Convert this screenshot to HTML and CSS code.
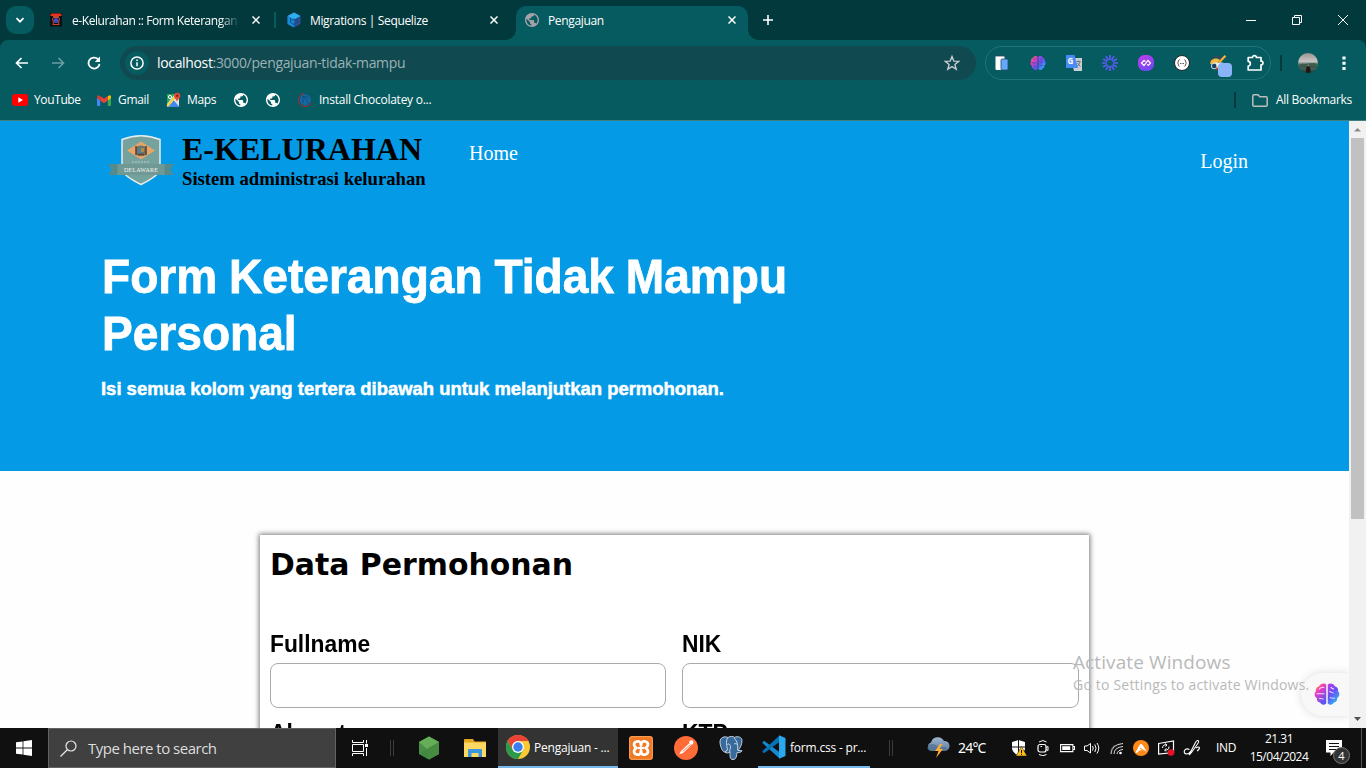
FILE: index.html
```html
<!DOCTYPE html>
<html lang="id">
<head>
<meta charset="utf-8">
<title>Pengajuan</title>
<link rel="stylesheet" href="styles.css">
</head>
<body>
<svg class="defs" width="0" height="0">
  <defs>
    <linearGradient id="brainL" x1="0" y1="0" x2=".6" y2="1"><stop offset="0" stop-color="#ff9a2e"/><stop offset=".15" stop-color="#ff8a3c"/><stop offset=".38" stop-color="#f23bc0"/><stop offset="1" stop-color="#5a55f5"/></linearGradient>
    <linearGradient id="brainR" x1="0" y1="0" x2=".6" y2="1"><stop offset="0" stop-color="#c03be8"/><stop offset=".5" stop-color="#6a50f5"/><stop offset="1" stop-color="#2bb5f8"/></linearGradient>
    <linearGradient id="loomy" x1="0" y1="0" x2=".5" y2="1"><stop offset="0" stop-color="#c63cf0"/><stop offset="1" stop-color="#7148ee"/></linearGradient>
    <linearGradient id="photo" x1="0" y1="0" x2="0" y2="1"><stop offset="0" stop-color="#9a918f"/><stop offset=".42" stop-color="#c9c5c3"/><stop offset=".52" stop-color="#7d8b87"/><stop offset="1" stop-color="#1f3a2c"/></linearGradient>
    <linearGradient id="cloud" x1="0" y1="0" x2="0" y2="1"><stop offset="0" stop-color="#9fb6cf"/><stop offset="1" stop-color="#5d7c9e"/></linearGradient>
    <symbol id="globe" viewBox="2 2 20 20"><path fill="currentColor" d="M12 2C6.480 2 2 6.480 2 12s4.480 10 10 10 10-4.480 10-10S17.520 2 12 2zm-1 17.930c-3.950-.49-7-3.850-7-7.930 0-.62.08-1.210.21-1.790L9 15v1c0 1.100.9 2 2 2v1.930zm6.900-2.540c-.26-.81-1-1.390-1.900-1.390h-1v-3c0-.55-.45-1-1-1H8v-2h2c.55 0 1-.45 1-1V7h2c1.100 0 2-.9 2-2v-.41c2.930 1.190 5 4.060 5 7.410 0 2.080-.8 3.970-2.100 5.390z"/></symbol>
    <symbol id="brain" viewBox="0 0 24 24">
      <path d="M11.300 2.500v19C9 23.600 6.300 22.600 5.700 20.600 3.300 20.400 2.200 18 2.800 16.300.3 15 0 11 1.800 9.300 1.200 7 2.600 4.800 4.600 4.500 5.500 1.500 9.500.5 11.300 2.500z" fill="url(#brainL)"/>
      <path d="M12.700 2.500v19c2.300 2.100 5 1.100 5.600-.9 2.400-.2 3.500-2.600 2.900-4.300 2.500-1.300 2.800-5.300 1-7 .6-2.300-.8-4.500-2.800-4.800-.9-3-4.900-4-6.700-2z" fill="url(#brainR)"/>
      <path d="M4.500 7.500C6 5.500 7.500 5 9.500 5.500M2.500 11.800h7M4.800 16.500c2-.5 2.800.5 4.200.8M15.500 5c1 2 1.500 2 3 2m-4.300 2.500c2 .3 2 1.500 4 1.500m-3.500 4.500c1.500.2 2 1.200 4.500.6" fill="none" stroke="var(--fold, #fff)" stroke-width="1" opacity=".85"/>
    </symbol>
    <symbol id="x" viewBox="0 0 8 8"><path d="M.5.5l7 7m0-7l-7 7" stroke="currentColor" stroke-width="1.500" fill="none"/></symbol>
  </defs>
</svg>

<header class="tabs">
  <button class="tab-search"><svg width="10" height="10" viewBox="0 0 10 10"><path d="M1.500 3.200 5 6.700l3.500-3.500" fill="none" stroke="#fff" stroke-width="1.700"/></svg></button>
  <div class="tab tab-one">
    <svg class="fav" width="14" height="14" viewBox="0 0 14 14"><path d="M1 0h12v13.500H1z" fill="#0b1013"/><path d="M2 .5h10l.7 2.500H1.300z" fill="#e8301e"/><path d="M4 3h6v2H4z" fill="#c8442e"/><circle cx="7" cy="7.500" r="2.500" fill="#4348c8"/><path d="M3.500 5l1 6m6-6-1 6M3.500 11.500h7" stroke="#d04424"/></svg>
    <span class="tab-title fade">e-Kelurahan :: Form Keterangan</span>
    <svg class="x" width="8" height="8"><use href="#x"/></svg>
  </div>
  <div class="tab tab-two">
    <svg class="fav" width="14" height="16" viewBox="0 0 14 16"><path d="M7 .5 13.500 4v8L7 15.500.5 12V4z" fill="#2c4f96"/><path d="M7 .5 13.500 4 7 7.500.5 4z" fill="#2eb0f0"/><path d="M7 7.500V15.500L.5 12V4z" fill="#168bd6"/><path d="M3.500 6v4.500L7 12.500l3.500-2V6M4 8.500l3-1.500 3 1.500" stroke="#0a4a80" stroke-width=".8" fill="none"/></svg>
    <span class="tab-title">Migrations | Sequelize</span>
    <svg class="x" width="8" height="8"><use href="#x"/></svg>
  </div>
  <div class="tab tab-active">
    <svg class="fav globe-tab" width="14" height="14"><use href="#globe"/></svg>
    <span class="tab-title">Pengajuan</span>
    <svg class="x" width="8" height="8"><use href="#x"/></svg>
  </div>
  <svg class="plus" width="10" height="10" viewBox="0 0 10 10"><path d="M5 0v10M0 5h10" stroke="#fff" stroke-width="1.600"/></svg>
  <div class="win">
    <svg width="10" height="10" viewBox="0 0 10 10"><path d="M0 5.500h10" stroke="#fff"/></svg>
    <svg width="10" height="10" viewBox="0 0 10 10"><path d="M.5 2.500h7v7h-7zM2.500 2.500v-2h7v7h-2" fill="none" stroke="#fff"/></svg>
    <svg width="10" height="10" viewBox="0 0 10 10"><path d="M0 0l10 10M10 0 0 10" stroke="#fff"/></svg>
  </div>
</header>

<nav class="toolbar">
  <div class="cell"><svg width="14" height="12" viewBox="0 0 14 12"><path d="M13 6H1.500M6.500 1l-5 5 5 5" fill="none" stroke="#fff" stroke-width="1.700"/></svg></div>
  <div class="cell dim"><svg width="14" height="12" viewBox="0 0 14 12"><path d="M1 6h11.500M7.500 1l5 5-5 5" fill="none" stroke="#fff" stroke-width="1.700"/></svg></div>
  <div class="cell"><svg width="14" height="14" viewBox="0 0 14 14"><path d="M12.500 7.800A5.500 5.500 0 1 1 11 3.200L12.500 5" fill="none" stroke="#fff" stroke-width="1.800"/><path d="M13 .5V6H7.800z" fill="#fff"/></svg></div>
  <div class="omnibox">
    <span class="info"><svg width="14" height="14" viewBox="0 0 14 14"><circle cx="7" cy="7" r="6.100" fill="none" stroke="#fff" stroke-width="1.500"/><path d="M7 6.200v4M7 3.500v1.500" stroke="#fff" stroke-width="1.500"/></svg></span>
    <span class="url"><b>localhost</b>:3000/pengajuan-tidak-mampu</span>
    <svg class="star" width="16" height="16" viewBox="0 0 16 16"><path d="M8 1.500l1.800 4.600 4.900.3-3.800 3.100 1.300 4.800L8 11.600l-4.200 2.700 1.300-4.800L1.300 6.400l4.900-.3z" fill="none" stroke="#c3cdd0" stroke-width="1.400"/></svg>
  </div>
  <div class="extensions">
    <svg width="16" height="16" viewBox="0 0 16 16"><rect x="1.500" y="1" width="9" height="14" rx="1" fill="#fff"/><path d="M2 1h8.500" stroke="#34414d" stroke-width=".8"/><rect x="7" y="4" width="7" height="11" rx="1" fill="#63a9fa" stroke="#28466f" stroke-width=".8"/></svg>
    <svg class="brain-mini" width="16" height="16"><use href="#brain"/></svg>
    <svg width="16" height="16" viewBox="0 0 16 16"><path d="M5 3h11v13H8z" fill="#c8ced2"/><path d="M0 0h8.500l3.500 13H0z" fill="#4a8af4"/><text x="1.600" y="9" class="g-letter">G</text><path d="M10.500 6.500h4M12.500 5.500v1M14 7c-.5 2-2 4-3 4m.3-3 3 3.500" stroke="#68757c" fill="none"/></svg>
    <svg width="16" height="16" viewBox="-8 -8 16 16"><path d="M0-3V-8M0 3v5M3 0h5M-3 0h-5M1.500-2.600 4-6.900M-1.500 2.600-4 6.900M2.600-1.500 6.900-4M-2.600 1.500-6.900 4M1.500 2.600 4 6.900M-1.500-2.600-4-6.900M2.600 1.500 6.900 4M-2.600-1.500-6.900-4" stroke="#5d5bf2" stroke-width="1.700"/></svg>
    <svg width="16" height="16" viewBox="0 0 16 16"><rect width="16" height="16" rx="6.500" fill="url(#loomy)"/><path d="M7.500 6.500 6 5.500 3.500 8 6 10.500 10 5.500 12.500 8 10.500 10.300 9 9.500" fill="none" stroke="#fff" stroke-width="1.200"/></svg>
    <svg width="16" height="16" viewBox="0 0 16 16"><circle cx="8" cy="8" r="7.500" fill="#fff" stroke="#222"/><path d="M5.500 4.500C4 5 5 7 3.500 8 5 9 4 11 5.500 11.500M10.500 4.500C12 5 11 7 12.500 8 11 9 12 11 10.500 11.500M6 8.500h1m.5 0h1m.5 0h1" fill="none" stroke="#444" stroke-width=".9"/></svg>
    <span class="ext-badge"><svg width="16" height="16" viewBox="0 0 16 16"><path d="M0 6C1 2 5 0 9 .5l3 2L9 6H2z" fill="#2a4a5e"/><path d="M1 5.500C4 2.500 8 3 10 5L6 9H0z" fill="#f6b83a"/><path d="M4 7.500h9l-2 6H6z" fill="#f4f1e8"/><circle cx="4.200" cy="11" r="2.800" fill="#1c3e66" stroke="#d5e1e4"/><path d="M15.500.8 9 7.500" stroke="#ffad3b" stroke-width="2.200"/><path d="M6 13.500h3" stroke="#d74227" stroke-width="2"/></svg><i></i></span>
    <svg width="18" height="18" viewBox="0 0 18 18"><path d="M2.200 3.500H6.500C6.200 1 10.700 1 10.400 3.500H15V7.200C17.600 7 17.600 11 15 10.800V16H2.200V12C5 12 5 7.300 2.200 7.300z" fill="none" stroke="#fff" stroke-width="1.700" stroke-linejoin="round"/></svg>
  </div>
  <i class="bar"></i>
  <svg class="avatar" width="20" height="20" viewBox="0 0 20 20"><circle cx="10" cy="10" r="10" fill="url(#photo)"/><path d="M.5 12c3-2 6-.8 9.500-1.500s6-.8 9.500.5l-1 4H2z" fill="#2f5544" opacity=".8"/><path d="M8 19.800v-4l1.500-3.300h1.500l1.500 3.500v3.700z" fill="#1d1718"/><circle cx="10.300" cy="12.500" r=".9" fill="#a77663"/></svg>
  <svg class="dots" width="4" height="16" viewBox="0 0 4 16"><path d="M.4 1.400h3.200v3H.4zM.4 6.700h3.200v3H.4zM.4 12h3.200v3H.4z" fill="#fff"/></svg>
</nav>

<nav class="bookmarks">
  <div class="bookmark"><svg width="16" height="12" viewBox="0 0 16 12"><rect width="16" height="12" rx="3" fill="#f00"/><path d="M6.300 3.300v5.400L11 6z" fill="#fff"/></svg><span>YouTube</span></div>
  <div class="bookmark gmail"><svg width="14" height="11" viewBox="0 0 14 11"><path d="M0 1.500 3.200 4v7H1c-.6 0-1-.4-1-1z" fill="#4285f4"/><path d="M14 1.500 10.800 4v7H13c.6 0 1-.4 1-1z" fill="#34a853"/><path d="M10.800 1 13 .2q1 .3 1 1.500V3l-3.200 2.400z" fill="#fbbc04"/><path d="M3.200 1 7 3.800 10.800 1v4.400L7 8.200 3.200 5.400z" fill="#ea4335"/><path d="M0 1.700Q0 .5 1.200.2L3.200 1v4.400L0 3z" fill="#d43a30"/></svg><span>Gmail</span></div>
  <div class="bookmark"><svg width="15" height="16" viewBox="0 0 15 16"><path d="M1 2h12v13H1z" fill="#dfe5e4"/><path d="M1 2h8L1 12z" fill="#2aa65b"/><path d="M1 15 7.500 8l6 7z" fill="#4387f3"/><path d="M1.500 14 9.500 4.500" stroke="#ffcf42" stroke-width="2.500"/><circle cx="4" cy="5" r="1.600" fill="none" stroke="#fff"/><path d="M11 10C10.700 7 8 6.500 8 4a3.200 3.200 0 0 1 6.400 0c0 2.500-3 3-3.400 6z" fill="#e14a3b"/><circle cx="11.200" cy="3.800" r="1.200" fill="#84271f"/></svg><span>Maps</span></div>
  <svg class="globe-mark" width="14" height="14"><use href="#globe"/></svg>
  <svg class="globe-mark" width="14" height="14"><use href="#globe"/></svg>
  <div class="bookmark choco"><svg width="14" height="14" viewBox="0 0 14 14"><circle cx="7.300" cy="6.800" r="5.600" fill="#1568a2"/><path d="M6 .6a6.500 6.500 0 1 0 6.800 9" fill="none" stroke="#c6202e" stroke-width="1"/><path d="M5 3.500c2 1.500 4 4 6 7.500M5 3.500C4.500 6 5 8 5.500 10M5 3.500l6 1" fill="none" stroke="#0b4a78" stroke-width=".8"/></svg><span>Install Chocolatey o...</span></div>
  <div class="all-marks"><svg width="16" height="13" viewBox="0 0 16 13"><path d="M.8 11V2Q.8.8 2 .8h4L7.800 2.800H14q1.200 0 1.200 1.200v7q0 1.200-1.200 1.200H2Q.8 12.200.8 11z" fill="none" stroke="#bdbdbd" stroke-width="1.500"/></svg><span>All Bookmarks</span></div>
</nav>

<div class="viewport">
  <main class="page">
    <section class="hero">
      <div class="nav">
        <svg class="logo" width="66" height="52" viewBox="0 0 66 52">
          <path d="M14 5.500Q33-2 52 5.500V35q0 6-19 15.500Q14 41 14 35z" fill="#76a29e" stroke="#e8eded" stroke-width="1.500"/>
          <path d="M33 7.500 47 16.500 33 25.500 19 16.500z" fill="#e7a568"/>
          <path d="M28 13q5-3 10 0v8q-5 2-10 0z" fill="#66766c"/><path d="M28 12v9m10-9v9M30 20.500h6" stroke="#68422e" stroke-width="1.600"/><path d="M30 15h3v4h-3z" fill="#4d7eb5"/><path d="M33 14h3v4h-3z" fill="#b68c3b"/><path d="M24 28h18" stroke="#c6d5d4" stroke-width=".8" stroke-dasharray="2 1"/>
          <path d="M.5 30H10v11H.5l3-5.500zM65.500 30H56v11h9.500l-3-5.500z" fill="#568b8d"/><path d="M9.500 30h47v11h-47z" fill="#709894"/>
          <text x="33" y="37.700" textLength="34" class="ribbon">DELAWARE</text>
        </svg>
        <div class="brand"><strong>E-KELURAHAN</strong><span>Sistem administrasi kelurahan</span></div>
        <a class="home">Home</a>
        <a class="login">Login</a>
      </div>
      <h1>Form Keterangan Tidak Mampu<br>Personal</h1>
      <p>Isi semua kolom yang tertera dibawah untuk melanjutkan permohonan.</p>
    </section>
    <section class="card">
      <h2>Data Permohonan</h2>
      <form class="fields">
        <label><span>Fullname</span><input type="text"></label>
        <label><span>NIK</span><input type="text"></label>
        <label><span>Alamat</span><input type="text"></label>
        <label><span>KTP</span><input type="text"></label>
      </form>
    </section>
  </main>
  <aside class="scroll">
    <svg width="17" height="17" viewBox="0 0 17 17"><path d="M5 10.500h7L8.500 7z" fill="#8a8a8a"/></svg>
    <i class="thumb"></i>
    <svg class="down" width="17" height="17" viewBox="0 0 17 17"><path d="M5 6h7L8.500 10z" fill="#505050"/></svg>
  </aside>
  <div class="assistant"><svg width="26" height="24" viewBox="0 0 24 24" preserveAspectRatio="none"><use href="#brain"/></svg></div>
  <div class="watermark"><strong>Activate Windows</strong><span>Go to Settings to activate Windows.</span></div>
</div>

<footer class="taskbar">
  <div class="start"><svg width="16" height="16" viewBox="0 0 16 16"><path d="M0 2.300 6.600 1.400v6.200H0zM7.400 1.300 16 0v7.600H7.400zM0 8.400h6.600v6.200L0 13.700zM7.400 8.400H16V16l-8.600-1.300z" fill="#fff"/></svg></div>
  <div class="search"><svg width="17" height="17" viewBox="0 0 17 17"><circle cx="11" cy="6" r="5" fill="none" stroke="#e8e8e8" stroke-width="1.200"/><path d="M7.500 9.500.5 16.500" stroke="#e8e8e8" stroke-width="1.200"/></svg><span>Type here to search</span></div>
  <div class="pin taskview"><svg width="17" height="16" viewBox="0 0 17 16"><path d="M.5 0v2.500h11V0M.5 16v-2.500h11V16M.5 4.500h11v7H.5zM14.500 0v3.500m0 4.500v8" fill="none" stroke="#fff"/><path d="M13 4h3v3h-3z" fill="#fff"/></svg></div>
  <i class="split"></i>
  <div class="pin node"><svg width="22" height="24" viewBox="0 0 22 24"><path d="M11 .5 21 6v12l-10 5.500L1 18V6z" fill="#4a9746"/><path d="M11 .5 21 6 9 13 1 18V6z" fill="#66ad58"/><path d="M21 6v12l-10 5.500L9 13z" fill="#478b42"/><path d="M1 18V6l8 7 2 10.500z" fill="#3f8240" opacity=".7"/></svg></div>
  <div class="pin"><svg width="22" height="19" viewBox="0 0 22 19"><path d="M0 1q0-1 1-1h8l1.500 2.500H22V18H0z" fill="#e6a81e"/><path d="M0 3.500h22V18H0z" fill="#ffd864"/><path d="M4 18V11q0-1 1-1h12q1 0 1 1v7h-3.500v-4h-7v4z" fill="#3b96dd"/></svg></div>
  <div class="app active">
    <svg width="24" height="24" viewBox="0 0 24 24"><circle cx="12" cy="12" r="12" fill="#fcc934"/><path d="M1.600 6A12 12 0 0 1 22.400 6H12L6.800 15z" fill="#ea4335"/><path d="M1.600 6A12 12 0 0 0 12 24l5.200-9L12 17.500 6.800 15z" fill="#2b9a4b"/><circle cx="12" cy="12" r="6" fill="#fff"/><circle cx="12" cy="12" r="4.700" fill="#3b7fee"/></svg>
    <span>Pengajuan - ...</span>
  </div>
  <div class="pin xampp"><svg width="24" height="24" viewBox="0 0 24 24"><rect width="24" height="24" rx="3" fill="#f07822"/><rect x=".7" y=".7" width="22.600" height="22.600" rx="2.500" fill="none" stroke="#f8b57d" stroke-width=".7"/><path d="M12 9.500C12 5 9.500 5 7.500 5.500 4 6.500 4.500 10.500 7.500 12 4.500 13.500 4 17.500 7.500 18.500c2 .5 4.500.5 4.500-4 0 4.500 2.500 4.500 4.500 4 3.500-1 3-5 0-6.500 3-1.500 3.500-5.500 0-6.500-2-.5-4.500-.5-4.500 4z" fill="none" stroke="#fff" stroke-width="2.800" stroke-linejoin="round"/><path d="M9 12h6" stroke="#fff" stroke-width="2.200"/></svg></div>
  <div class="pin"><svg width="24" height="24" viewBox="0 0 24 24"><circle cx="12" cy="12" r="12" fill="#ff6c37"/><path d="M5 18.500 7 15l8-7.500 2 2L9 17z" fill="#fff"/><path d="M8.500 15.500 16 9" stroke="#ff6c37" stroke-width=".8"/><circle cx="17.300" cy="6.500" r="2.200" fill="#fff"/></svg></div>
  <div class="pin"><svg width="24" height="24" viewBox="0 0 24 24"><path d="M8 14C5 20 1 11 1 6S6 0 9 1.500C11 0 14 .3 15.500 1.300 19 0 23 1 23 4.500c0 4-2 8-4 10l4 .2c-1 2-4 2.300-5 1.800-.5 3-.5 7-4 7s-3-4-3-7.500c-1 1.200-4 1.300-5 .2z" fill="#386a9b" stroke="#c5d2df" stroke-width="1"/><path d="M8.500 2C6.500 6 8 10 8.500 14M15 2c4 4 4 8 3.500 12M8.500 8.500C10 7 12 9 11.500 12c-.2 1.500-1 1-.7 4M15 8c2-1 2.500 0 3.200.5" fill="none" stroke="#d9e1e9" stroke-width=".9"/></svg></div>
  <div class="app running">
    <svg width="24" height="24" viewBox="0 0 24 24"><path d="M17 16.800 2 5.800.2 7.700 17 23z" fill="#168ad0"/><path d="M17 7.200 2 18.200.2 16.300 17 1z" fill="#0872b7"/><path d="M17 .3 23.500 3v18L17 23.700z" fill="#2aa8ed"/></svg>
    <span>form.css - pr...</span>
  </div>
  <i class="split split-right"></i>
  <div class="weather"><svg width="24" height="22" viewBox="0 0 24 22"><path d="M5 14A4.500 4.500 0 0 1 5 5.500 7 7 0 0 1 18 4a5 5 0 0 1 1 10z" fill="url(#cloud)"/><path d="M2 13a4 4 0 0 1 4-6c4 0 5 2 6 3h8q2 4-3 4H5z" fill="#4c6d91" opacity=".6"/><path d="M14 7 9 14h3.500L10 21l7-9h-3.500l3-5z" fill="#ffac36"/></svg><span>24°C</span></div>
  <div class="tray">
    <svg width="16" height="16" viewBox="0 0 16 16"><path d="M7.500 0 14 2v6c0 4-4 6-6.500 7.500C4 14 1 11 1 8V2z" fill="#fff"/><path d="M7.500 0v15M1 7h13" stroke="#111"/><path d="M10.500 6.500 16 16H5z" fill="#ffc01e" stroke="#111" stroke-width=".5"/><path d="M10.500 10v3m0 .8V15" stroke="#111"/></svg>
    <svg width="16" height="16" viewBox="0 0 16 16"><rect x="3" y="4.500" width="8" height="7.500" rx="2" fill="none" stroke="#fff" stroke-width="1.200"/><path d="M11 7.500l2-1v4l-2-1M4 2q4-3 7.500 0M4 14.500q4 2.500 7.500 0" fill="none" stroke="#fff"/><path d="M5.500 6.500h1.500" stroke="#fff" fill="none"/></svg>
    <svg width="16" height="16" viewBox="0 0 16 16"><path d="M.6 4.600h12.300v7H.6zM13.500 6.500h1v3h-1" fill="none" stroke="#fff" stroke-width="1.100"/><path d="M2.200 6.200h8v3.800h-8z" fill="#fff"/></svg>
    <svg width="17" height="16" viewBox="0 0 17 16"><path d="M.5 6v4.500h2.500L6.500 13V3.500L3 6zM8.500 6q1.500 2.300 0 4.500M10.800 4.500q2.500 3.800 0 7.500M13 3q3.500 5 0 10.500" fill="none" stroke="#fff"/></svg>
    <svg width="16" height="16" viewBox="0 0 16 16"><path d="M2 14Q2.500 4.500 14 3.500M5 14Q5 7.500 14 6.500M8 14q.5-4 6-4.500" fill="none" stroke="#ddd"/><path d="M2 14Q1 9 5.500 5" fill="none" stroke="#888" stroke-width=".7"/><circle cx="11.500" cy="13" r="1.300" fill="#fff"/></svg>
    <svg width="16" height="16" viewBox="0 0 16 16"><circle cx="8" cy="8" r="8" fill="#ff8a17"/><path d="M2.500 12.500 6.500 5q1.500-2 3-.3L14 12q-3-2-5.500-2T4 13z" fill="#fff"/><path d="M7 8l6 4" stroke="#ff8a17"/></svg>
    <svg width="17" height="16" viewBox="0 0 17 16"><path d="M.6 3.500 15.500 1v11.500L.6 14z" fill="none" stroke="#fff" stroke-width="1.200"/><path d="M4.500 8q.5-4 4-3M7 3.500l2 1.500-1.500 1.500M11 6.500q0 4-4 3.500M8.500 8.500 6.500 10l1.500 1.500" fill="none" stroke="#fff"/><circle cx="13" cy="12.500" r="3.300" fill="#e81123"/></svg>
    <svg width="18" height="16" viewBox="0 0 18 16"><path d="M6 15 12.500 2.500Q14-.5 15.500 1 16 2 14.500 4L8.500 12.500 6 15M6.500 9.500Q3 8 1.500 10.500q-1 3 2 3.500 2.500 0 4.500-3M13 8q3-2 3.500 0-.5 2-2.500 3" fill="none" stroke="#fff" stroke-width="1.100"/></svg>
  </div>
  <span class="lang">IND</span>
  <div class="clock"><span>21.31</span><span>15/04/2024</span></div>
  <div class="notify"><svg width="16" height="16" viewBox="0 0 16 16"><path d="M0 0h16v12.500H7.500L4.500 16v-3.500H0z" fill="#fff"/><path d="M3 3.500h10M3 6.500h10M3 9.500h10" stroke="#111"/></svg><b>4</b></div>
  <i class="desktop-edge"></i>
</footer>
</body>
</html>
```
FILE: styles.css
```css
* { box-sizing: border-box; }
body { margin: 0; width: 1366px; height: 768px; overflow: hidden; display: flex; flex-direction: column; font: 12px/16px "Open Sans", "Noto Sans", sans-serif; color: #fff; background: #fff; }
svg { display: block; flex: none; }
.defs { position: absolute; }

.tabs { height: 40px; flex: none; background: #02393d; display: flex; align-items: center; padding-left: 6px; }
.tab-search { width: 28px; height: 28px; border: 0; border-radius: 10px; background: #055b60; padding: 0; display: grid; place-items: center; }
.tab { display: flex; align-items: center; height: 28px; }
.tab-title { flex: 1; white-space: nowrap; margin: 2px 0 0 9px; letter-spacing: -.35px; }
.fade { -webkit-mask-image: linear-gradient(90deg, #000 88%, transparent); mask-image: linear-gradient(90deg, #000 88%, transparent); flex: none; width: 168px; letter-spacing: -.42px; }
.tab-one { width: 242px; height: 16px; padding: 0 15px; border-right: 2px solid #055b60; }
.tab-one .x { margin-left: 12px; }
.tab-two { width: 240px; padding: 0 18px 0 11px; }
.tab-active { width: 232px; height: 34px; margin-top: 6px; padding: 0 12px 6px 9px; background: #055b60; border-radius: 10px 10px 0 0; position: relative; }
.tab-active::before, .tab-active::after { content: ""; position: absolute; bottom: 0; width: 10px; height: 10px; }
.tab-active::before { left: -10px; background: radial-gradient(circle at 0 0, transparent 9.5px, #055b60 10px); }
.tab-active::after { right: -10px; background: radial-gradient(circle at 100% 0, transparent 9.5px, #055b60 10px); }
.globe-tab { color: #a5a1a8; }
.plus { margin-left: 15px; }
.win { margin-left: auto; display: flex; gap: 36px; padding-right: 18px; }

.toolbar { height: 46px; flex: none; background: linear-gradient(#02393d, #02393d) 0 0/100% 8px no-repeat; display: flex; align-items: center; padding-left: 4px; position: relative; z-index: 0; }
.toolbar::before { content: ""; position: absolute; inset: 0; z-index: -1; background: #055b60; border-radius: 8px 8px 0 0; }
.cell { width: 36px; display: grid; place-items: center; }
.dim { opacity: .4; }
.omnibox { width: 856px; height: 34px; margin-left: 8px; padding: 0 16px 0 5px; border-radius: 17px; background: #10494f; display: flex; align-items: center; }
.info { width: 24px; height: 24px; border-radius: 50%; background: #055b60; display: grid; place-items: center; }
.url { flex: 1; margin-left: 8px; font-size: 14px; line-height: 20px; letter-spacing: -.34px; color: #9bb3b6; }
.url b { font-weight: 400; color: #fff; }
.extensions { width: 286px; height: 34px; margin-left: 9px; padding: 0 6px 0 8px; border: 1px solid #23717a; border-radius: 17px; display: flex; align-items: center; justify-content: space-between; }
.brain-mini { --fold: #055b60; }
.g-letter { font: bold 8px "Open Sans", sans-serif; fill: #fff; }
.ext-badge { position: relative; }
.ext-badge i { position: absolute; left: 8px; top: 8px; width: 14px; height: 14px; border-radius: 4px; background: #8ab4f8; }
.bar { width: 2px; height: 16px; margin-left: 9px; background: #02393d; }
.avatar { margin-left: 16px; }
.dots { margin-left: 24px; }

.bookmarks { height: 35px; flex: none; background: #055b60; border-bottom: 1px solid #3f7f7d; display: grid; grid-template-columns: 85px 69px 68px 32px 32px 1fr auto; align-items: center; padding: 0 14px 6px 12px; letter-spacing: -.38px; }
.bookmark { display: flex; align-items: center; gap: 6px; white-space: nowrap; }
.gmail { gap: 7px; letter-spacing: -.3px; }
.choco { gap: 7px; letter-spacing: -.25px; }
.globe-mark { color: #fff; }
.all-marks { display: flex; align-items: center; gap: 8px; padding-left: 16px; border-left: 2px solid #02393d; letter-spacing: -.3px; }

.viewport { flex: 1; min-height: 0; display: flex; position: relative; overflow: hidden; }
.page { width: 1349px; overflow: hidden; background: #fefefe; color: #000; }
.hero { height: 350px; background: #049ae6; padding: 12px 101px 0 102px; color: #fff; }
.nav { display: flex; font: 20px/24px "Liberation Serif", serif; }
.logo { margin: 1px 0 0 6px; }
.ribbon { font: 6px "Liberation Serif", serif; fill: #f1f5f5; text-anchor: middle; }
.brand { display: flex; flex-direction: column; margin-left: 8px; width: 244px; color: #000; font-weight: bold; white-space: nowrap; }
.brand strong { font-size: 32px; line-height: 33px; }
.brand span { margin-top: 1px; font-size: 18.720px; line-height: 24px; letter-spacing: -.02px; }
.home { margin: 8px 0 0 43px; }
.login { margin: 16px 0 0 auto; }
h1 { margin: 57px 0 0; font: bold 48px/57px "Liberation Sans", Arial, sans-serif; white-space: nowrap; transform: scaleX(.96); transform-origin: 0 0; letter-spacing: 0; word-spacing: -1px; -webkit-text-stroke: .8px #fff; }
.hero p { margin: 16px 0 0 -1px; font: bold 18.450px/22px "Liberation Sans", Arial, sans-serif; -webkit-text-stroke: .5px #fff; }
.card { width: 829px; height: 500px; margin: 64px auto 0; padding: 10px 10px 0; background: #fff; box-shadow: 0 0 5px 1px #777; }
h2 { margin: 0; font: bold 29.900px/40px "DejaVu Sans", Verdana, sans-serif; }
.fields { margin-top: 45px; display: grid; grid-template-columns: 396px 397px; gap: 11px 16px; }
.fields label { display: flex; flex-direction: column; }
.fields span { font: bold 24px/28px "Liberation Sans", Arial, sans-serif; height: 33px; transform: scaleX(.95); transform-origin: 0 0; }
.fields input { height: 45px; width: 100%; border: 1px solid #aaa; border-radius: 8px; background: #fff; }
.scroll { width: 17px; background: #f1f1f1; display: flex; flex-direction: column; }
.thumb { height: 381px; margin: 0 2px; background: #c1c1c1; }
.down { margin-top: auto; }
.assistant { position: absolute; right: 17px; top: 552px; width: 48px; height: 43px; padding: 9px 0 0 13px; border-radius: 22px 0 0 22px; background: #f8f8f8; box-shadow: 0 0 8px #ddd; clip-path: inset(-10px 0 -10px -10px); }
.watermark { position: absolute; left: 1073px; top: 529px; color: #b9b9b9; display: flex; flex-direction: column; white-space: nowrap; }
.watermark strong { font-weight: 400; font-size: 19px; line-height: 25px; letter-spacing: .1px; }
.watermark span { font-size: 14px; line-height: 20px; letter-spacing: .2px; }

.taskbar { height: 40px; flex: none; background: #101010; display: flex; align-items: center; }
.start { width: 48px; display: grid; place-items: center; }
.search { width: 288px; height: 40px; border: 1px solid #636363; background: #404040; display: flex; align-items: center; gap: 11px; padding-left: 11px; font-size: 15px; color: #ddd; letter-spacing: -.5px; }
.pin { width: 45px; display: grid; place-items: center; }
.taskview { width: 48px; }
.split { width: 4px; height: 16px; margin: 0 12px 0 6px; border: solid #3b3b3b; border-width: 0 1px; }
.node { width: 46px; }
.app { height: 40px; display: flex; align-items: center; gap: 4px; border-bottom: 2px solid #76b9ed; white-space: nowrap; letter-spacing: -.2px; }
.app span { padding-top: 1px; }
.active { width: 120px; padding-left: 8px; background: #333; margin-left: 1px; }
.running { width: 112px; margin-left: 5px; padding-left: 4px; }
.split-right { margin: 0 0 0 19px; }
.weather { margin-left: 33px; width: 86px; display: flex; align-items: center; gap: 8px; font: 14px/20px "Noto Sans", sans-serif; letter-spacing: -.8px; }
.tray { width: 190px; display: flex; justify-content: space-between; margin-left: -1px; }
.lang { margin-left: 15px; width: 21px; letter-spacing: -.3px; }
.clock { width: 70px; margin-left: 7px; display: flex; flex-direction: column; text-align: center; line-height: 18px; letter-spacing: -.5px; }
.notify { position: relative; margin-left: 12px; }
.notify b { position: absolute; left: 7px; top: 7px; width: 17px; height: 17px; border-radius: 50%; border: 1px solid #777; background: #333; font: 11px/15px "Open Sans", sans-serif; text-align: center; }
.desktop-edge { width: 1px; height: 40px; margin-left: auto; margin-right: 4px; background: #555; }
```
